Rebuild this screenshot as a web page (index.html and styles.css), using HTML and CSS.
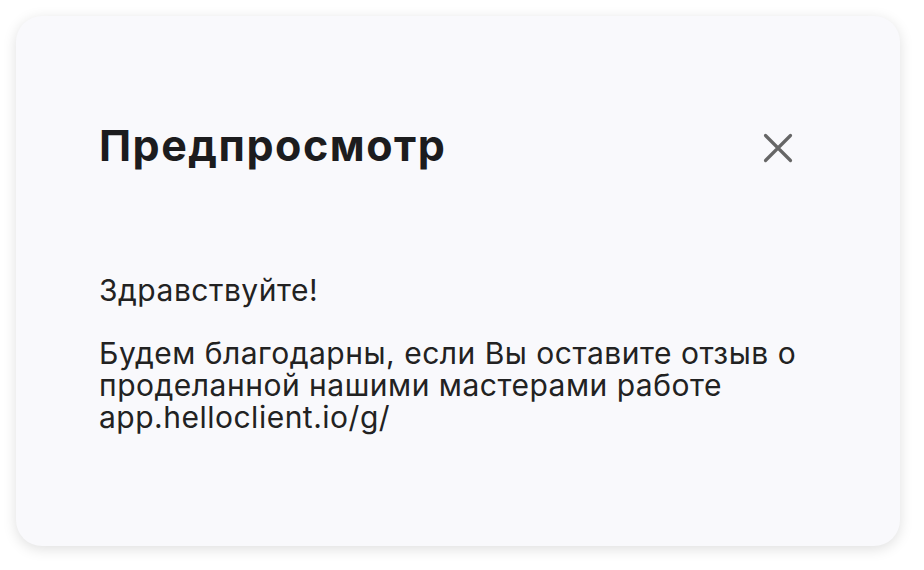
FILE: index.html
```html
<!DOCTYPE html>
<html lang="ru">
<head>
<meta charset="utf-8">
<link rel="stylesheet" href="styles.css">
</head>
<body>
<div class="modal">
  <div class="header">
    <h1 class="title">Предпросмотр</h1>
    <button class="close" aria-label="Закрыть">
      <svg width="30" height="30" viewBox="0 0 30 30"><path d="M2.5 2.5L27.5 27.5M27.5 2.5L2.5 27.5" stroke="#666" stroke-width="3.2" stroke-linecap="round"/></svg>
    </button>
  </div>
  <div class="body">
    <p>Здравствуйте!</p>
    <p>Будем благодарны, если Вы оставите отзыв о проделанной нашими мастерами работе app.helloclient.io/g/</p>
  </div>
</div>
</body>
</html>
```
FILE: styles.css
```css
html, body { margin: 0; padding: 0; background: #fff; }
body { padding: 16px 24px 24px 16px; font-family: Inter, "Noto Sans", sans-serif; color: #1c1c1e; }
.modal {
  width: 884px; height: 530px; box-sizing: border-box;
  background: #f9f9fc; border-radius: 26px;
  box-shadow: 0 3px 14px rgba(0,0,0,0.13);
  padding: 107px 60px 0 83px;
}
.header { display: flex; justify-content: space-between; align-items: flex-start; margin-right: 48px; }
.title { margin: 0; font-size: 43px; font-weight: 700; line-height: 44px; letter-spacing: 1.5px; color: #1c1c1e; }
.close { border: 0; background: none; padding: 0; width: 30px; height: 30px; display: flex; margin-top: 10px; margin-right: -1px; }
.body { margin-top: 107px; font-size: 30px; line-height: 32px; letter-spacing: 0.5px; max-width: 725px; color: #222; }
.body p { margin: 0 0 31px 0; }
```
